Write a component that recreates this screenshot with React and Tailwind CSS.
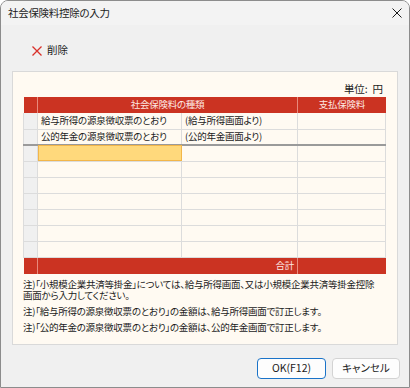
const FONT = "font-['Noto_Sans_CJK_JP','Noto_Sans',sans-serif] [font-feature-settings:'palt']";

const rows = [
  { kind: "給与所得の源泉徴収票のとおり", src: "(給与所得画面より)" },
  { kind: "公的年金の源泉徴収票のとおり", src: "(公的年金画面より)" },
  { kind: "", src: "", selected: true },
  { kind: "", src: "" },
  { kind: "", src: "" },
  { kind: "", src: "" },
  { kind: "", src: "" },
  { kind: "", src: "" },
  { kind: "", src: "" },
];

const App = () => {
  return (
    <div className={`w-[410px] h-[388px] ${FONT} text-[#1b1b1b]`}>
      <div className="w-full h-full border border-[#8c8c8c] rounded-t-lg bg-[#f0f0f0] flex flex-col overflow-hidden">
        {/* Title bar */}
        <div className="h-[24px] bg-[#f3f3f3] flex items-center justify-between pl-[7px] pr-[6px] shrink-0">
          <span className="text-[10.5px] tracking-[-0.3px] leading-none">社会保険料控除の入力</span>
          <svg width="10" height="10" viewBox="0 0 10 10" className="mr-[1px]">
            <path d="M0.5 0.5 L9.5 9.5 M9.5 0.5 L0.5 9.5" stroke="#1b1b1b" strokeWidth="1" />
          </svg>
        </div>

        {/* Toolbar */}
        <div className="h-[46px] flex items-center pl-[31px] pt-[5px] shrink-0">
          <button className="flex items-center gap-[5px]">
            <svg width="10" height="10" viewBox="0 0 10 10">
              <path d="M0.5 0.5 L9.5 9.5 M9.5 0.5 L0.5 9.5" stroke="#d9302a" strokeWidth="1.3" />
            </svg>
            <span className="text-[10.5px] leading-none">削除</span>
          </button>
        </div>

        {/* Content panel */}
        <div className="mx-[11px] h-[274px] border border-[#d9d9d9] bg-[#fffaf2] pl-[10px] pr-[9px] pt-[10px] shrink-0">
          <div className="h-[15px] flex justify-end items-center pr-[5px] text-[10.5px] leading-none whitespace-pre">単位:  円</div>

          <table className="border-collapse table-fixed w-[362px] text-[9.5px] tracking-[-0.25px] leading-none">
            <colgroup>
              <col className="w-[14px]" />
              <col className="w-[144px]" />
              <col className="w-[116px]" />
              <col className="w-[88px]" />
            </colgroup>
            <thead>
              <tr className="h-[16px] bg-[#cb3322] text-[#fde8e4]">
                <th className="border-r border-[#e88a7c] p-0"></th>
                <th colSpan={2} className="border-r border-[#e88a7c] font-normal p-0">社会保険料の種類</th>
                <th className="font-normal p-0">支払保険料</th>
              </tr>
            </thead>
            <tbody>
              {rows.map((r, i) => (
                <tr
                  key={i}
                  className={`h-[16px] ${i === 1 ? "border-b-2 border-b-[#9a9a9a]" : "border-b border-b-[#dcdcdc]"}`}
                >
                  <td className="bg-[#f0f0f0] border-x border-[#dcdcdc] p-0"></td>
                  <td
                    className={`border-r border-[#dcdcdc] px-[3px] py-0 whitespace-nowrap ${
                      r.selected ? "bg-[#ffd97c] outline outline-1 -outline-offset-1 outline-[#f2b64a]" : ""
                    }`}
                  >
                    {r.kind}
                  </td>
                  <td className="border-r border-[#dcdcdc] pl-[3px] pr-0 py-0 whitespace-nowrap">{r.src}</td>
                  <td className="border-r border-[#dcdcdc] p-0"></td>
                </tr>
              ))}
              <tr className="h-[17px] bg-[#cb3322] text-[#fde8e4]">
                <td className="border-r border-[#e88a7c] p-0"></td>
                <td colSpan={2} className="border-r border-[#e88a7c] text-right pr-[3px] p-0">合計</td>
                <td className="p-0"></td>
              </tr>
            </tbody>
          </table>

          <div className="mt-[5px] w-[354px] text-[9.5px] tracking-[-0.25px] leading-[11px] flex flex-col gap-[5px]">
            <p>注)「小規模企業共済等掛金」については、給与所得画面、又は小規模企業共済等掛金控除画面から入力してください。</p>
            <p>注)「給与所得の源泉徴収票のとおり」の金額は、給与所得画面で訂正します。</p>
            <p>注)「公的年金の源泉徴収票のとおり」の金額は、公的年金画面で訂正します。</p>
          </div>
        </div>

        {/* Buttons */}
        <div className="flex justify-end gap-[6px] pr-[9px] pt-[13px]">
          <button className="w-[69px] h-[21px] rounded-[4px] border border-[#1a73c8] bg-[#fdfdfd] text-[10.5px] leading-none">
            OK(F12)
          </button>
          <button className="w-[68px] h-[21px] rounded-[4px] border border-[#d3d3d3] bg-[#fdfdfd] text-[10.5px] leading-none">
            キャンセル
          </button>
        </div>
      </div>
    </div>
  );
};

export default App;
